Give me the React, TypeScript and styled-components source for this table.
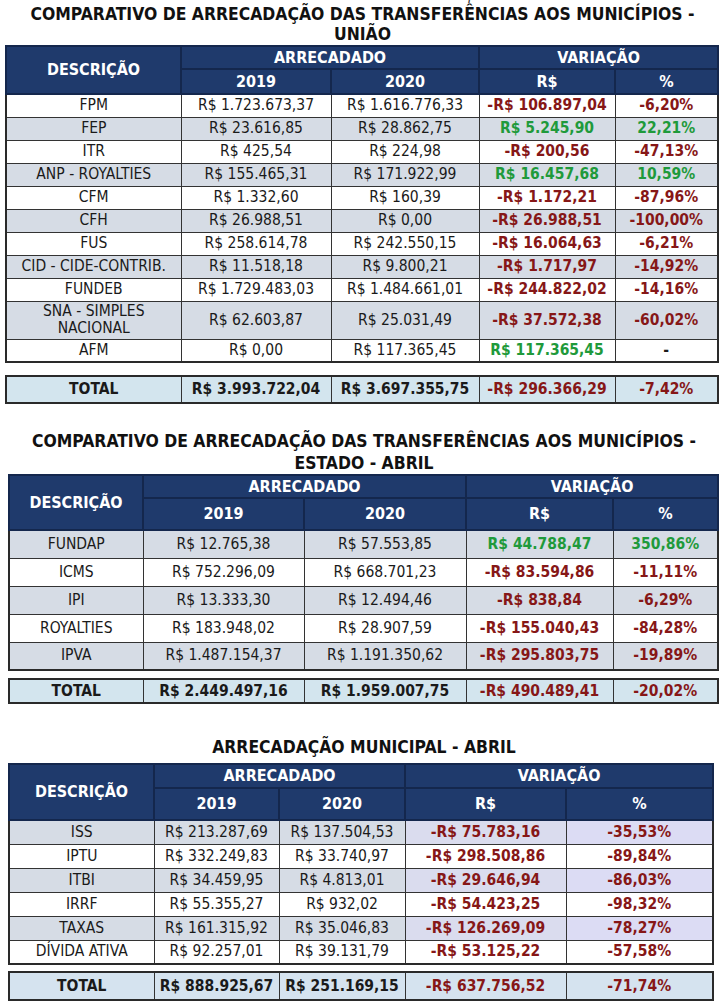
import React from "react";
import styled, { createGlobalStyle } from "styled-components";

const GlobalStyle = createGlobalStyle`
  html, body { margin: 0; padding: 0; background: #ffffff; }
  body { font-family: "DejaVu Sans Condensed", "DejaVu Sans", sans-serif; color: #1a1a1a; }
`;

const Page = styled.div`
  width: 720px;
  height: 1005px;
  overflow: hidden;
  display: flex;
  flex-direction: column;
`;

const Source = styled.div`
  margin-top: -14px;
  height: 18px;
  line-height: 18px;
  text-align: center;
  font-size: 15px;
  font-style: italic;
  color: #333;
`;

const Section = styled.section<{ $top: number; $left: number }>`
  margin-top: ${(p) => p.$top}px;
  margin-left: ${(p) => p.$left}px;
  display: flex;
  flex-direction: column;
`;

const Title = styled.h2<{ $gap: number; $lh: number }>`
  margin: 0 0 ${(p) => p.$gap}px 0;
  font-size: 17.4px;
  line-height: ${(p) => p.$lh}px;
  font-weight: bold;
  text-align: center;
  color: #111;
`;

const Table = styled.table<{ $w: number }>`
  width: ${(p) => p.$w}px;
  table-layout: fixed;
  border-collapse: collapse;
  border: 2px solid #2a2a2a;
`;

const Col = styled.col<{ $w: number }>`
  width: ${(p) => p.$w}px;
`;

const HeadCell = styled.th<{ $h?: number }>`
  background: #1f3a6c;
  color: #ffffff;
  font-size: 16px;
  line-height: 18px;
  font-weight: bold;
  text-align: center;
  padding: 0;
  border: 2px solid #14274d;
  height: ${(p) => p.$h ?? 24}px;
`;

const Row = styled.tr<{ $h: number }>`
  height: ${(p) => p.$h}px;
`;

type Tone = "neg" | "pos" | "plain";

const Cell = styled.td<{ $bg: string; $tone: Tone; $bold?: boolean }>`
  background: ${(p) => p.$bg};
  color: ${(p) => (p.$tone === "neg" ? "#861717" : p.$tone === "pos" ? "#1f9a3b" : "#1a1a1a")};
  font-weight: ${(p) => (p.$bold || p.$tone !== "plain" ? "bold" : "normal")};
  font-size: 15.5px;
  line-height: 17px;
  text-align: center;
  padding: 0 4px;
  border: 1px solid #333;
`;

const TotalTable = styled(Table)<{ $mt: number }>`
  margin-top: ${(p) => p.$mt}px;
`;

type Item = { d: string; a: string; b: string; r: string; p: string; h?: number };

type Palette = { white: string; shade: string; shadeR?: string; shadeP?: string; total: string };

const toneOf = (v: string): Tone => (v.startsWith("-") ? "neg" : "pos");

type Props = {
  lines: string[];
  titleGap: number;
  lineH: number;
  cols: number[];
  head: [number, number];
  rows: Item[];
  rowH: number;
  firstShaded: boolean;
  total: Item & { h: number };
  totalGap: number;
  palette: Palette;
  top: number;
  left: number;
};

function Report(props: Props) {
  const { cols, palette } = props;
  const w = cols.reduce((s, c) => s + c, 0);
  const colgroup = (
    <colgroup>
      {cols.map((c, i) => (
        <Col key={i} $w={c} />
      ))}
    </colgroup>
  );
  return (
    <Section $top={props.top} $left={props.left}>
      <Title $gap={props.titleGap} $lh={props.lineH}>
        {props.lines.map((l, i) => (
          <React.Fragment key={i}>
            {i > 0 && <br />}
            {l}
          </React.Fragment>
        ))}
      </Title>
      <Table $w={w}>
        {colgroup}
        <thead>
          <tr>
            <HeadCell rowSpan={2}>DESCRIÇÃO</HeadCell>
            <HeadCell colSpan={2} $h={props.head[0]}>ARRECADADO</HeadCell>
            <HeadCell colSpan={2} $h={props.head[0]}>VARIAÇÃO</HeadCell>
          </tr>
          <tr>
            <HeadCell $h={props.head[1]}>2019</HeadCell>
            <HeadCell $h={props.head[1]}>2020</HeadCell>
            <HeadCell $h={props.head[1]}>R$</HeadCell>
            <HeadCell $h={props.head[1]}>%</HeadCell>
          </tr>
        </thead>
        <tbody>
          {props.rows.map((r, i) => {
            const shaded = props.firstShaded ? i % 2 === 0 : i % 2 === 1;
            const bg = shaded ? palette.shade : palette.white;
            const bgR = shaded ? palette.shadeR ?? palette.shade : palette.white;
            const bgP = shaded ? palette.shadeP ?? palette.shade : palette.white;
            return (
              <Row key={r.d} $h={r.h ?? props.rowH}>
                <Cell $bg={bg} $tone="plain">{r.d}</Cell>
                <Cell $bg={bg} $tone="plain">{r.a}</Cell>
                <Cell $bg={bg} $tone="plain">{r.b}</Cell>
                <Cell $bg={bgR} $tone={toneOf(r.r)}>{r.r}</Cell>
                <Cell $bg={bgP} $tone={r.p === "-" ? "plain" : toneOf(r.r)} $bold>{r.p}</Cell>
              </Row>
            );
          })}
        </tbody>
      </Table>
      <TotalTable $w={w} $mt={props.totalGap}>
        {colgroup}
        <tbody>
          <Row $h={props.total.h}>
            <Cell $bg={palette.total} $tone="plain" $bold>{props.total.d}</Cell>
            <Cell $bg={palette.total} $tone="plain" $bold>{props.total.a}</Cell>
            <Cell $bg={palette.total} $tone="plain" $bold>{props.total.b}</Cell>
            <Cell $bg={palette.total} $tone="neg">{props.total.r}</Cell>
            <Cell $bg={palette.total} $tone="neg">{props.total.p}</Cell>
          </Row>
        </tbody>
      </TotalTable>
    </Section>
  );
}

const uniao: Item[] = [
  { d: "FPM", a: "R$ 1.723.673,37", b: "R$ 1.616.776,33", r: "-R$ 106.897,04", p: "-6,20%" },
  { d: "FEP", a: "R$ 23.616,85", b: "R$ 28.862,75", r: "R$ 5.245,90", p: "22,21%" },
  { d: "ITR", a: "R$ 425,54", b: "R$ 224,98", r: "-R$ 200,56", p: "-47,13%" },
  { d: "ANP - ROYALTIES", a: "R$ 155.465,31", b: "R$ 171.922,99", r: "R$ 16.457,68", p: "10,59%" },
  { d: "CFM", a: "R$ 1.332,60", b: "R$ 160,39", r: "-R$ 1.172,21", p: "-87,96%" },
  { d: "CFH", a: "R$ 26.988,51", b: "R$ 0,00", r: "-R$ 26.988,51", p: "-100,00%" },
  { d: "FUS", a: "R$ 258.614,78", b: "R$ 242.550,15", r: "-R$ 16.064,63", p: "-6,21%" },
  { d: "CID - CIDE-CONTRIB.", a: "R$ 11.518,18", b: "R$ 9.800,21", r: "-R$ 1.717,97", p: "-14,92%" },
  { d: "FUNDEB", a: "R$ 1.729.483,03", b: "R$ 1.484.661,01", r: "-R$ 244.822,02", p: "-14,16%" },
  { d: "SNA - SIMPLES NACIONAL", a: "R$ 62.603,87", b: "R$ 25.031,49", r: "-R$ 37.572,38", p: "-60,02%", h: 38 },
  { d: "AFM", a: "R$ 0,00", b: "R$ 117.365,45", r: "R$ 117.365,45", p: "-" },
];

const estado: Item[] = [
  { d: "FUNDAP", a: "R$ 12.765,38", b: "R$ 57.553,85", r: "R$ 44.788,47", p: "350,86%" },
  { d: "ICMS", a: "R$ 752.296,09", b: "R$ 668.701,23", r: "-R$ 83.594,86", p: "-11,11%" },
  { d: "IPI", a: "R$ 13.333,30", b: "R$ 12.494,46", r: "-R$ 838,84", p: "-6,29%" },
  { d: "ROYALTIES", a: "R$ 183.948,02", b: "R$ 28.907,59", r: "-R$ 155.040,43", p: "-84,28%" },
  { d: "IPVA", a: "R$ 1.487.154,37", b: "R$ 1.191.350,62", r: "-R$ 295.803,75", p: "-19,89%" },
];

const municipal: Item[] = [
  { d: "ISS", a: "R$ 213.287,69", b: "R$ 137.504,53", r: "-R$ 75.783,16", p: "-35,53%" },
  { d: "IPTU", a: "R$ 332.249,83", b: "R$ 33.740,97", r: "-R$ 298.508,86", p: "-89,84%" },
  { d: "ITBI", a: "R$ 34.459,95", b: "R$ 4.813,01", r: "-R$ 29.646,94", p: "-86,03%" },
  { d: "IRRF", a: "R$ 55.355,27", b: "R$ 932,02", r: "-R$ 54.423,25", p: "-98,32%" },
  { d: "TAXAS", a: "R$ 161.315,92", b: "R$ 35.046,83", r: "-R$ 126.269,09", p: "-78,27%" },
  { d: "DÍVIDA ATIVA", a: "R$ 92.257,01", b: "R$ 39.131,79", r: "-R$ 53.125,22", p: "-57,58%" },
];

export default function App() {
  return (
    <Page>
      <GlobalStyle />
      <Source>Fonte: Secretaria de Gestão Municipal</Source>
      <Report
        top={0}
        left={5}
        lines={["COMPARATIVO DE ARRECADAÇÃO DAS TRANSFERÊNCIAS AOS MUNICÍPIOS -", "UNIÃO"]}
        lineH={20}
        titleGap={1}
        cols={[175, 150, 148, 136, 103]}
        head={[21, 23]}
        rows={uniao}
        rowH={23}
        firstShaded={false}
        total={{ d: "TOTAL", a: "R$ 3.993.722,04", b: "R$ 3.697.355,75", r: "-R$ 296.366,29", p: "-7,42%", h: 27 }}
        totalGap={12}
        palette={{ white: "#ffffff", shade: "#d6dce5", total: "#d3e5ee" }}
      />
      <Report
        top={26}
        left={8}
        lines={["COMPARATIVO DE ARRECADAÇÃO DAS TRANSFERÊNCIAS AOS MUNICÍPIOS -", "ESTADO - ABRIL"]}
        lineH={22}
        titleGap={0}
        cols={[134, 161, 162, 147, 105]}
        head={[21, 30]}
        rows={estado}
        rowH={28}
        firstShaded={true}
        total={{ d: "TOTAL", a: "R$ 2.449.497,16", b: "R$ 1.959.007,75", r: "-R$ 490.489,41", p: "-20,02%", h: 24 }}
        totalGap={7}
        palette={{ white: "#ffffff", shade: "#d6dce5", total: "#d3e5ee" }}
      />
      <Report
        top={32}
        left={8}
        lines={["ARRECADAÇÃO MUNICIPAL - ABRIL"]}
        lineH={22}
        titleGap={5}
        cols={[145, 125, 126, 161, 147]}
        head={[22, 30]}
        rows={municipal}
        rowH={24}
        firstShaded={true}
        total={{ d: "TOTAL", a: "R$ 888.925,67", b: "R$ 251.169,15", r: "-R$ 637.756,52", p: "-71,74%", h: 28 }}
        totalGap={6}
        palette={{ white: "#ffffff", shade: "#d6dce5", shadeR: "#dadcee", shadeP: "#dcdcf4", total: "#d5e3ef" }}
      />
    </Page>
  );
}
